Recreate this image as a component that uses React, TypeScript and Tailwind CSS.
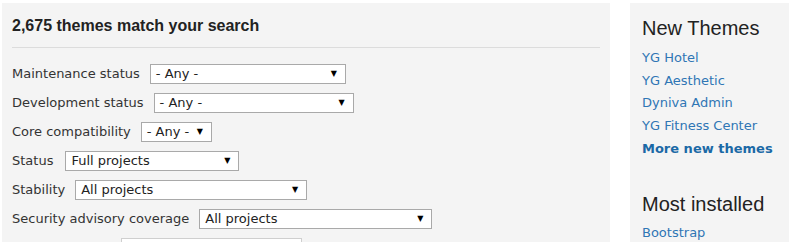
import React from 'react';

const filters = [
  { label: 'Maintenance status', value: '- Any -', width: 'w-[196px]' },
  { label: 'Development status', value: '- Any -', width: 'w-[200px]' },
  { label: 'Core compatibility', value: '- Any -', width: 'w-[71px]' },
  { label: 'Status', value: 'Full projects', width: 'w-[174px]' },
  { label: 'Stability', value: 'All projects', width: 'w-[232px]' },
  { label: 'Security advisory coverage', value: 'All projects', width: 'w-[233px]' },
];

const newThemes = ['YG Hotel', 'YG Aesthetic', 'Dyniva Admin', 'YG Fitness Center'];

function FakeSelect({ value, width }: { value: string; width: string }) {
  return (
    <div className={`${width} h-[20px] bg-white border border-[#a9a9a9] flex items-center justify-between pl-[5px] pr-[8px] text-[13px] text-[#222]`}>
      <span className="whitespace-nowrap">{value}</span>
      <span className="text-[8px] leading-none text-black">▼</span>
    </div>
  );
}

export default function App() {
  return (
    <div className="w-[789px] h-[242px] overflow-hidden bg-white flex gap-[20px] pt-[3px] pl-[2px] font-['DejaVu_Sans',Verdana,sans-serif]">
      {/* Search results + filters */}
      <section className="w-[608px] shrink-0 bg-[#f4f4f4] px-[10px] pt-[13px]">
        <h2 className="font-['Liberation_Sans',Arial,sans-serif] font-bold text-[16px] leading-[19px] text-[#222]">
          2,675 themes match your search
        </h2>
        <hr className="mt-[12px] border-0 border-t border-[#dcdcdc]" />
        <div className="mt-[16px] flex flex-col gap-[9px]">
          {filters.map((f) => (
            <div key={f.label} className={`flex items-center ${f.label === 'Status' ? 'gap-[12px]' : 'gap-[10px]'}`}>
              <span className="text-[13px] text-[#333] whitespace-nowrap">{f.label}</span>
              <FakeSelect value={f.value} width={f.width} />
            </div>
          ))}
          {/* keyword field, only its top edge is in view */}
          <div className="flex items-start pl-[109px]">
            <div className="w-[181px] h-[20px] bg-white border border-[#cfcfcf]" />
          </div>
        </div>
      </section>

      {/* Sidebar */}
      <aside className="flex-1 bg-[#f4f4f4] pl-[12px] pt-[13px]">
        <h3 className="font-['Liberation_Sans',Arial,sans-serif] text-[20px] leading-[24px] text-[#222]">New Themes</h3>
        <ul className="mt-[7px] flex flex-col text-[13px] leading-[22.7px]">
          {newThemes.map((t) => (
            <li key={t}>
              <a className="text-[#2f76b5]" href="#">{t}</a>
            </li>
          ))}
          <li>
            <a className="text-[#1b69a6] font-bold" href="#">More new themes</a>
          </li>
        </ul>
        <h3 className="mt-[31px] font-['Liberation_Sans',Arial,sans-serif] text-[20px] leading-[24px] text-[#222]">Most installed</h3>
        <ul className="mt-[6px] text-[13px] leading-[22.7px]">
          <li>
            <a className="text-[#2f76b5]" href="#">Bootstrap</a>
          </li>
        </ul>
      </aside>
    </div>
  );
}
